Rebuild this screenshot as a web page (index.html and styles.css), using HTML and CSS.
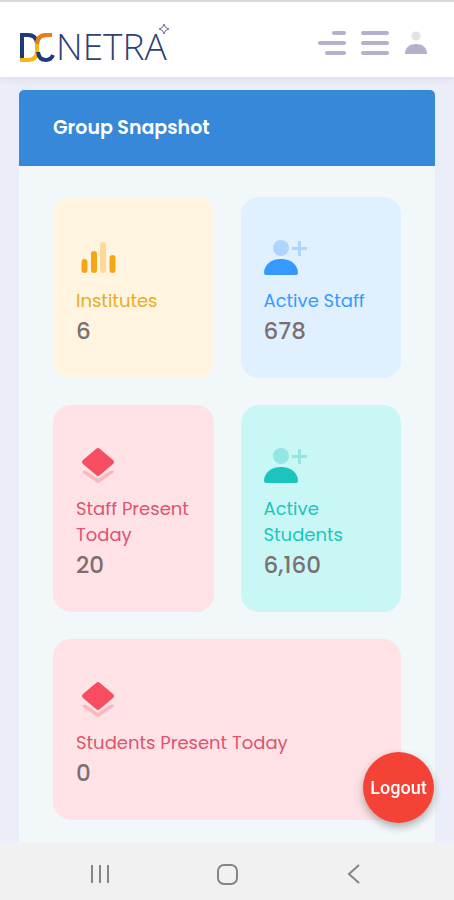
FILE: index.html
```html
<!DOCTYPE html>
<html lang="en">
<head>
    <meta charset="UTF-8">
    <meta name="viewport" content="width=device-width, initial-scale=1.0">
    <title>DC Netra</title>
    <link rel="stylesheet" href="styles.css">
</head>
<body>
    <header class="header">
        <a class="logo" href="#" aria-label="DC Netra">
            <svg width="152" height="42" viewBox="0 0 152 42">
                <!-- two interlocking ribbons -->
                <g fill="none" stroke-width="4">
                    <path d="M3 37V13h6q8 0 9 8" stroke="#1d3a7c"/>
                    <path d="M1 38h8q9 0 9-9v-8q1-8 9-8h6" stroke="#f7b614"/>
                    <path d="M18 22q1-9 9-9h6" stroke="#ea7a1c"/>
                    <path d="M19 30q1 8 8 8 5 0 7-5" stroke="#1d3a7c"/>
                </g>
                <text class="logo-name" x="37" y="38">NETRA</text>
                <path d="M145 2l1.500 3.500 3.500 1.500-3.500 1.500-1.500 3.500-1.500-3.500-3.500-1.500 3.500-1.500z" fill="none" stroke="#6a7186"/>
            </svg>
        </a>
        <div class="header-actions">
            <button class="icon-btn" type="button" aria-label="Open side menu">
                <svg width="28" height="26" viewBox="0 0 28 26">
                    <path d="M16 3h10M2 13h24M9 23h17" stroke="#b3b1cb" stroke-width="4" stroke-linecap="round"/>
                </svg>
            </button>
            <button class="icon-btn" type="button" aria-label="Open menu">
                <svg width="28" height="26" viewBox="0 0 28 26">
                    <path d="M2 3h24M2 13h24M2 23h24" stroke="#b3b1cb" stroke-width="4" stroke-linecap="round"/>
                </svg>
            </button>
            <button class="icon-btn" type="button" aria-label="Profile">
                <svg width="24" height="26" viewBox="0 0 24 26">
                    <circle cx="12" cy="6" r="4.500" fill="#e3e3e6"/>
                    <path d="M1 24c0-6 4-10 11-10s11 4 11 10z" fill="#b3b1cb"/>
                </svg>
            </button>
        </div>
    </header>

    <main class="content">
        <section class="card">
            <h1 class="card-title">Group Snapshot</h1>
            <div class="tiles">
                <div class="tile tile-warning">
                    <svg class="tile-icon" width="44" height="44" viewBox="0 0 44 44">
                        <path d="M8.500 29v8M18 21v16M36.500 25v12" stroke="#f5a614" stroke-width="6" stroke-linecap="round"/>
                        <path d="M27 12v25" stroke="#fcd996" stroke-width="6" stroke-linecap="round"/>
                    </svg>
                    <a class="tile-label" href="#">Institutes</a>
                    <div class="tile-value">6</div>
                </div>
                <div class="tile tile-primary">
                    <svg class="tile-icon" width="44" height="44" viewBox="0 0 44 44">
                        <g class="faded">
                            <circle cx="17" cy="15" r="8"/>
                            <path d="M34 8h3v6h6v3h-6v6h-3v-6h-6v-3h6z"/>
                        </g>
                        <path d="M0 40c0-8 7-14 17-14s17 6 17 14c0 1-1 2-2 2H2c-1 0-2-1-2-2z"/>
                    </svg>
                    <a class="tile-label" href="#">Active Staff</a>
                    <div class="tile-value">678</div>
                </div>
                <div class="tile tile-danger">
                    <svg class="tile-icon" width="44" height="44" viewBox="0 0 44 44">
                        <path d="M20 8q2-2 4 0l13 11q2 2 0 4l-13 11q-2 2-4 0l-13-11q-2-2 0-4z"/>
                        <path class="faded" d="M7 30q2-1 3 0l12 8 12-8q2-1 4 0 0 2-1 2l-13 9q-2 2-4 0l-13-9q-1-1 0-2z"/>
                    </svg>
                    <a class="tile-label" href="#">Staff Present Today</a>
                    <div class="tile-value">20</div>
                </div>
                <div class="tile tile-success">
                    <svg class="tile-icon" width="44" height="44" viewBox="0 0 44 44">
                        <g class="faded">
                            <circle cx="17" cy="15" r="8"/>
                            <path d="M34 8h3v6h6v3h-6v6h-3v-6h-6v-3h6z"/>
                        </g>
                        <path d="M0 40c0-8 7-14 17-14s17 6 17 14c0 1-1 2-2 2H2c-1 0-2-1-2-2z"/>
                    </svg>
                    <a class="tile-label" href="#">Active Students</a>
                    <div class="tile-value">6,160</div>
                </div>
                <div class="tile tile-danger tile-wide">
                    <svg class="tile-icon" width="44" height="44" viewBox="0 0 44 44">
                        <path d="M20 8q2-2 4 0l13 11q2 2 0 4l-13 11q-2 2-4 0l-13-11q-2-2 0-4z"/>
                        <path class="faded" d="M7 30q2-1 3 0l12 8 12-8q2-1 4 0 0 2-1 2l-13 9q-2 2-4 0l-13-9q-1-1 0-2z"/>
                    </svg>
                    <a class="tile-label" href="#">Students Present Today</a>
                    <div class="tile-value">0</div>
                </div>
            </div>
        </section>
    </main>

    <button class="logout" type="button">Logout</button>

    <nav class="system-nav">
        <button class="icon-btn" type="button" aria-label="Recent apps">
            <svg width="24" height="24" viewBox="0 0 24 24" fill="none" stroke="#858585" stroke-width="2">
                <path d="M4 3v18M12 3v18M20 3v18"/>
            </svg>
        </button>
        <button class="icon-btn" type="button" aria-label="Home">
            <svg width="24" height="24" viewBox="0 0 24 24" fill="none" stroke="#858585" stroke-width="2">
                <rect x="3" y="3" width="19" height="19" rx="6"/>
            </svg>
        </button>
        <button class="icon-btn" type="button" aria-label="Back">
            <svg width="24" height="24" viewBox="0 0 24 24" fill="none" stroke="#858585" stroke-width="2">
                <path d="M17 3L7 12l10 9"/>
            </svg>
        </button>
    </nav>
</body>
</html>
```
FILE: styles.css
```css
:root {
    --page-bg: #ebeef8;
    --card-bg: #f2f7fa;
    --title-bg: #3788d8;
    --value-color: #7a7073;
}
* {
    box-sizing: border-box;
}
body {
    margin: 0;
    min-height: 100vh;
    display: flex;
    flex-direction: column;
    background-color: var(--page-bg);
    font-family: Poppins, Inter, "Liberation Sans", sans-serif;
}
.header {
    display: flex;
    align-items: center;
    justify-content: space-between;
    height: 77px;
    padding: 6px 26px 0 19px;
    background-color: #fff;
    border-top: 2px solid #dadada;
    box-shadow: 0 2px 8px rgba(90, 90, 130, 0.1);
}
.logo svg {
    display: block;
    overflow: visible;
}
.logo-name {
    font-family: "Open Sans", sans-serif;
    font-size: 37px;
    font-weight: 300;
    fill: #2f3f74;
}
.header-actions {
    display: flex;
    align-items: center;
    gap: 15px;
}
.icon-btn {
    display: flex;
    padding: 0;
    border: none;
    background: none;
    cursor: pointer;
}

/* Snapshot card */
.content {
    flex: 1;
    display: flex;
    padding: 13px 19px 0;
}
.card {
    flex: 1;
    background-color: var(--card-bg);
    border-radius: 5px 5px 0 0;
    overflow: hidden;
}
.card-title {
    margin: 0;
    padding: 24px 34px;
    background-color: var(--title-bg);
    color: #fff;
    font-size: 19px;
    font-weight: 600;
    line-height: 28px;
}
.tiles {
    display: grid;
    grid-template-columns: 1fr 1fr;
    gap: 27px;
    padding: 31px 34px 20px;
}
.tile {
    padding: 36px 23px 30px;
    border-radius: 18px;
}
.tile-wide {
    grid-column: span 2;
}
.tile-icon {
    display: block;
    margin-bottom: 11px;
    fill: currentColor;
}
.tile-icon .faded {
    opacity: 0.3;
}
.tile-label {
    display: block;
    color: inherit;
    font-size: 18px;
    font-weight: 400;
    line-height: 26px;
    text-decoration: none;
}
.tile-value {
    color: var(--value-color);
    font-size: 23px;
    font-weight: 500;
    line-height: 34px;
}
.tile-warning {
    background-color: #fff4e0;
    color: #e5ad25;
}
.tile-primary {
    background-color: #e1f0ff;
    color: #3699ff;
}
.tile-danger {
    background-color: #ffe2e5;
    color: #f64e60;
}
.tile-danger .tile-label {
    color: #db5470;
}
.tile-success {
    background-color: #c9f7f5;
    color: #1bc5bd;
}

.logout {
    position: fixed;
    right: 20px;
    bottom: 77px;
    width: 71px;
    height: 71px;
    padding: 0;
    border: none;
    border-radius: 50%;
    background-color: #f44336;
    color: #fff;
    font-family: Roboto, sans-serif;
    font-size: 18px;
    font-weight: 500;
    box-shadow: 0 4px 8px rgba(0, 0, 0, 0.3);
    cursor: pointer;
}

/* Phone navigation bar */
.system-nav {
    position: sticky;
    bottom: 0;
    display: flex;
    align-items: center;
    justify-content: space-around;
    height: 57px;
    padding: 4px 37px 0;
    background-color: #f1f1f1;
}
```
